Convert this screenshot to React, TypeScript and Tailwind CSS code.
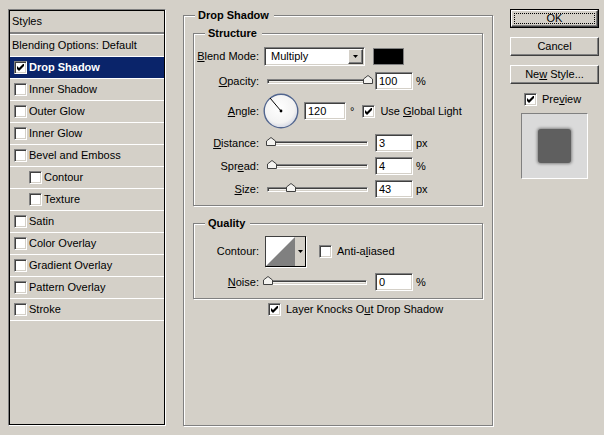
import React from "react";

const sunken =
  "border border-t-[#808080] border-l-[#808080] border-b-white border-r-white shadow-[inset_1px_1px_0_#404040,inset_-1px_-1px_0_#d4d0c8]";
const raised =
  "border border-t-white border-l-white border-b-[#404040] border-r-[#404040] shadow-[inset_-1px_-1px_0_#808080]";

const Check = ({ checked = false }: { checked?: boolean }) => (
  <span className={`flex w-[13px] h-[13px] shrink-0 items-center justify-center bg-white ${sunken}`}>
    {checked && (
      <svg width="7" height="7" viewBox="0 0 7 7">
        <path d="M0 2v3l2 2l5-5v-3l-5 5z" fill="#000" />
      </svg>
    )}
  </span>
);

const Field = ({ value, w = "w-[38px]" }: { value: string; w?: string }) => (
  <div className={`${w} h-[18px] shrink-0 bg-white pl-[3px] flex items-center ${sunken}`}>{value}</div>
);

const Label = ({ children }: { children: React.ReactNode }) => (
  <div className="w-[65px] shrink-0 text-right">{children}</div>
);

const Slider = ({ thumb, trackLeft = 4, trackWidth = 101 }: { thumb: number; trackLeft?: number; trackWidth?: number }) => (
  <div className="relative ml-[4px] w-[112px] h-[18px] shrink-0 flex flex-col justify-end pb-[6px]">
    <div
      className={`h-[5px] bg-[#f2f1ee] ${sunken}`}
      style={{ marginLeft: trackLeft, width: trackWidth }}
    />
    <svg className="absolute bottom-[6px]" style={{ left: thumb }} width="10" height="9" viewBox="0 0 10 9">
      <path d="M0.5 8.5V4L5 0.5L9.5 4V8.5Z" fill="#f4f3f0" stroke="#404040" />
    </svg>
  </div>
);

const Arrow = () => (
  <svg width="5" height="3" viewBox="0 0 5 3">
    <path d="M0 0h5L2.5 3z" fill="#000" />
  </svg>
);

const styles: { name: string; indent?: boolean; selected?: boolean; checked?: boolean }[] = [
  { name: "Drop Shadow", selected: true, checked: true },
  { name: "Inner Shadow" },
  { name: "Outer Glow" },
  { name: "Inner Glow" },
  { name: "Bevel and Emboss" },
  { name: "Contour", indent: true },
  { name: "Texture", indent: true },
  { name: "Satin" },
  { name: "Color Overlay" },
  { name: "Gradient Overlay" },
  { name: "Pattern Overlay" },
  { name: "Stroke" },
];

const Button = ({ children }: { children: React.ReactNode }) => (
  <div className={`h-[19px] w-[89px] flex items-center justify-center bg-[#d4d0c8] ${raised}`}>{children}</div>
);

export default function App() {
  return (
    <div className="w-[604px] h-[435px] bg-[#d4d0c8] flex items-start pt-[9px] pl-[8px] text-[11px] leading-[13px] text-black font-['Liberation_Sans',Arial,sans-serif] overflow-hidden">
      {/* styles list */}
      <div className="w-[158px] h-[417px] shrink-0 border border-t-[#808080] border-l-[#808080] border-b-white border-r-white">
        <div className="h-full border border-black flex flex-col">
          <div className="h-[21px] flex items-center pl-[2px]">Styles</div>
          <div className="h-[2px] bg-[#808080]" />
          <div className="h-[1px] bg-white" />
          <div className="h-[22px] border-b border-white flex items-center pl-[2px]">Blending Options: Default</div>
          {styles.map((s) => (
            <div
              key={s.name}
              className={`h-[22px] border-b border-white flex items-center ${s.indent ? "pl-[19px]" : "pl-[4px]"} ${
                s.selected ? "bg-[#0a246a] text-white font-bold" : ""
              }`}
            >
              <Check checked={s.checked} />
              <span className="ml-[2px]">{s.name}</span>
            </div>
          ))}
        </div>
      </div>

      {/* main settings */}
      <fieldset className="ml-[17px] w-[310px] h-[417px] shrink-0 min-w-0 border border-[#808080] shadow-[1px_1px_0_#fff,inset_1px_1px_0_#fff]">
        <legend className="ml-[11px] pl-[3px] pr-[5px] font-bold bg-[#d4d0c8]">Drop Shadow</legend>

        <fieldset className="ml-[9px] mt-[5px] w-[290px] min-w-0 pb-[7px] border border-[#808080] shadow-[1px_1px_0_#fff,inset_1px_1px_0_#fff]">
          <legend className="ml-[11px] pl-[3px] pr-[5px] font-bold bg-[#d4d0c8]">Structure</legend>

          <div className="mt-[7px] h-[19px] flex items-center">
            <Label>
              <span className="underline">B</span>lend Mode:
            </Label>
            <div className={`ml-[5px] w-[101px] h-[19px] bg-white flex items-center ${sunken}`}>
              <span className="flex-1 pl-[6px]">Multiply</span>
              <div className={`w-[15px] h-[15px] mr-[1px] bg-[#d4d0c8] flex items-center justify-center ${raised}`}>
                <Arrow />
              </div>
            </div>
            <div className="ml-[8px] w-[31px] h-[17px] bg-black border border-[#808080]" />
          </div>

          <div className="mt-[6px] h-[18px] flex items-center">
            <Label>
              <span className="underline">O</span>pacity:
            </Label>
            <Slider thumb={100} />
            <Field value="100" />
            <span className="ml-[3px]">%</span>
          </div>

          <div className="mt-[3px] h-[36px] flex items-center">
            <Label>
              <span className="underline">A</span>ngle:
            </Label>
            <svg className="ml-[4px] shrink-0" width="36" height="36" viewBox="0 0 36 36">
              <defs>
                <radialGradient id="dial" cx="45%" cy="40%" r="60%">
                  <stop offset="0%" stopColor="#ffffff" />
                  <stop offset="75%" stopColor="#f3f3f3" />
                  <stop offset="100%" stopColor="#d6d9e4" />
                </radialGradient>
              </defs>
              <circle cx="18" cy="18" r="16.8" fill="url(#dial)" stroke="#52668f" strokeWidth="1.4" />
              <line x1="18" y1="18" x2="7" y2="5" stroke="#000" strokeWidth="1" />
              <circle cx="18" cy="18" r="1.4" fill="#000" />
            </svg>
            <div className="ml-[5px]">
              <Field value="120" w="w-[42px]" />
            </div>
            <span className="ml-[4px]">°</span>
            <div className="ml-[8px]">
              <Check checked />
            </div>
            <span className="ml-[5px]">
              Use <span className="underline">G</span>lobal Light
            </span>
          </div>

          <div className="mt-[5px] h-[18px] flex items-center">
            <Label>
              <span className="underline">D</span>istance:
            </Label>
            <Slider thumb={3} />
            <Field value="3" />
            <span className="ml-[3px]">px</span>
          </div>

          <div className="mt-[5px] h-[18px] flex items-center">
            <Label>
              Spr<span className="underline">e</span>ad:
            </Label>
            <Slider thumb={4} />
            <Field value="4" />
            <span className="ml-[3px]">%</span>
          </div>

          <div className="mt-[5px] h-[18px] flex items-center">
            <Label>
              <span className="underline">S</span>ize:
            </Label>
            <Slider thumb={23} />
            <Field value="43" />
            <span className="ml-[3px]">px</span>
          </div>
        </fieldset>

        <fieldset className="ml-[9px] mt-[11px] w-[290px] min-w-0 pb-[7px] border border-[#808080] shadow-[1px_1px_0_#fff,inset_1px_1px_0_#fff]">
          <legend className="ml-[11px] pl-[3px] pr-[5px] font-bold bg-[#d4d0c8]">Quality</legend>

          <div className="mt-[6px] h-[31px] flex items-center">
            <Label>Contour:</Label>
            <div className="ml-[6px] w-[41px] h-[31px] flex border border-t-[#404040] border-l-[#404040] border-b-black border-r-black shadow-[1px_1px_0_#fff]">
              <svg width="29" height="29" viewBox="0 0 29 29" className="shrink-0">
                <rect width="29" height="29" fill="#fff" />
                <path d="M0 29L29 0V29Z" fill="#808080" />
              </svg>
              <div className="flex-1 bg-[#d4d0c8] flex items-center justify-center">
                <Arrow />
              </div>
            </div>
            <div className="ml-[13px]">
              <Check />
            </div>
            <span className="ml-[5px]">
              Anti-a<span className="underline">l</span>iased
            </span>
          </div>

          <div className="mt-[6px] h-[18px] flex items-center">
            <Label>
              <span className="underline">N</span>oise:
            </Label>
            <Slider thumb={0} trackLeft={0} trackWidth={104} />
            <Field value="0" />
            <span className="ml-[3px]">%</span>
          </div>
        </fieldset>

        <div className="mt-[4px] ml-[84px] h-[13px] flex items-center">
          <Check checked />
          <span className="ml-[5px]">
            Layer Knocks O<span className="underline">u</span>t Drop Shadow
          </span>
        </div>
      </fieldset>

      {/* buttons + preview */}
      <div className="ml-[17px] w-[89px] shrink-0 flex flex-col">
        <div className="h-[19px] w-[89px] border border-black flex">
          <div className={`flex-1 flex bg-[#d4d0c8] ${raised}`}>
            <div className="flex-1 m-[2px] border border-dotted border-black flex items-center justify-center">OK</div>
          </div>
        </div>
        <div className="mt-[9px]">
          <Button>Cancel</Button>
        </div>
        <div className="mt-[9px]">
          <Button>
            <span>
              Ne<span className="underline">w</span> Style...
            </span>
          </Button>
        </div>
        <div className="mt-[9px] h-[13px] pl-[14px] flex items-center">
          <Check checked />
          <span className="ml-[5px]">
            Pre<span className="underline">v</span>iew
          </span>
        </div>
        <div className="mt-[7px] ml-[11px] w-[67px] h-[66px] bg-[#dadada] border border-t-[#808080] border-l-[#808080] border-b-white border-r-white flex items-center justify-center">
          <div className="w-[33px] h-[34px] rounded-[3px] bg-[#5f5f5f] shadow-[0_0_3px_1px_rgba(0,0,0,0.4)]" />
        </div>
      </div>
    </div>
  );
}
